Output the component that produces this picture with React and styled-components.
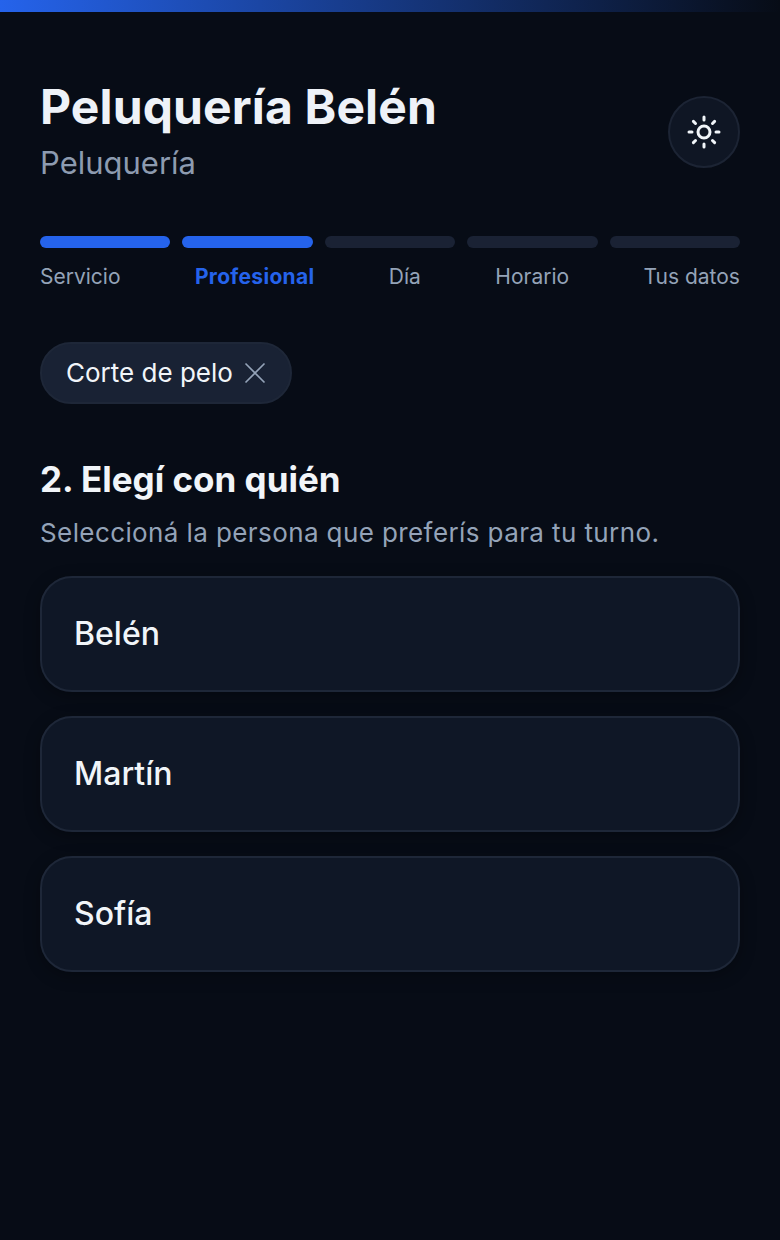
import React from 'react';
import styled, { createGlobalStyle } from 'styled-components';
import { Sun } from 'lucide-react';

const steps = [
  { label: 'Servicio', done: true },
  { label: 'Profesional', done: true, active: true },
  { label: 'Día' },
  { label: 'Horario' },
  { label: 'Tus datos' },
];

const people = ['Belén', 'Martín', 'Sofía'];

const App = () => {
  return (
    <Page>
      <GlobalStyle />
      <TopBar />
      <Content>
        <Header>
          <div>
            <Title>Peluquería Belén</Title>
            <Subtitle>Peluquería</Subtitle>
          </div>
          <ThemeButton>
            <Sun size={36} strokeWidth={2} />
          </ThemeButton>
        </Header>

        <Bars>
          {steps.map((s) => (
            <Bar key={s.label} $done={s.done} />
          ))}
        </Bars>
        <Labels>
          {steps.map((s) => (
            <StepLabel key={s.label} $active={s.active}>
              {s.label}
            </StepLabel>
          ))}
        </Labels>

        <Chip>
          <ChipText>Corte de pelo</ChipText>
          <svg width="22" height="22" viewBox="0 0 22 22" fill="none" stroke="currentColor" strokeWidth="1.6">
            <path d="M1.5 1.5l19 19M20.5 1.5l-19 19" />
          </svg>
        </Chip>

        <Heading>2. Elegí con quién</Heading>
        <Hint>Seleccioná la persona que preferís para tu turno.</Hint>

        <List>
          {people.map((p) => (
            <PersonCard key={p}>{p}</PersonCard>
          ))}
        </List>
      </Content>
    </Page>
  );
};

const GlobalStyle = createGlobalStyle`
  body {
    margin: 0;
    background: #070c16;
    font-family: Inter, "Liberation Sans", sans-serif;
  }
`;

const Page = styled.div`
  min-height: 1240px;
  background: #070c16;
`;

const TopBar = styled.div`
  height: 12px;
  background: linear-gradient(90deg, #2563eb 0%, #070c16 100%);
`;

const Content = styled.div`
  padding: 68px 40px 0;
`;

const Header = styled.div`
  display: flex;
  justify-content: space-between;
  align-items: center;
  margin-bottom: 52px;
`;

const Title = styled.h1`
  margin: 0;
  font-size: 48px;
  line-height: 54px;
  font-weight: 700;
  letter-spacing: 0.13px;
  color: #eef2f8;
`;

const Subtitle = styled.p`
  margin: 8px 0 0;
  font-size: 31px;
  line-height: 42px;
  color: #8d9bb0;
`;

const ThemeButton = styled.button`
  display: flex;
  align-items: center;
  justify-content: center;
  width: 72px;
  height: 72px;
  padding: 0;
  border-radius: 50%;
  border: 2px solid #1c2434;
  background: #0f1624;
  color: #f1f5f9;
`;

const Bars = styled.div`
  display: flex;
  gap: 12px;
`;

const Bar = styled.div`
  flex: 1;
  height: 12px;
  border-radius: 6px;
  background: ${(p) => (p.$done ? '#2563eb' : '#1a2234')};
`;

const Labels = styled.div`
  display: flex;
  justify-content: space-between;
  margin-top: 16px;
  margin-bottom: 52px;
`;

const StepLabel = styled.span`
  font-size: 21px;
  line-height: 26px;
  font-weight: ${(p) => (p.$active ? 700 : 400)};
  letter-spacing: ${(p) => (p.$active ? '0.3px' : '0')};
  color: ${(p) => (p.$active ? '#2563eb' : '#94a3b8')};
`;

const Chip = styled.div`
  display: inline-flex;
  align-items: center;
  gap: 11px;
  height: 62px;
  box-sizing: border-box;
  padding: 0 24px;
  border-radius: 31px;
  border: 2px solid #1e2738;
  background: #192234;
  color: #f1f5f9;
  font-size: 26px;

  svg {
    color: #94a3b8;
  }
`;

const ChipText = styled.span`
  padding-bottom: 2px;
`;

const Heading = styled.h2`
  margin: 53px 0 0;
  font-size: 35px;
  line-height: 44px;
  font-weight: 700;
  color: #f1f5f9;
`;

const Hint = styled.p`
  margin: 14px 0 0;
  font-size: 26px;
  line-height: 36px;
  letter-spacing: 0.4px;
  color: #94a3b8;
`;

const List = styled.div`
  display: flex;
  flex-direction: column;
  gap: 24px;
  margin-top: 25px;
`;

const PersonCard = styled.div`
  display: flex;
  align-items: center;
  height: 116px;
  box-sizing: border-box;
  padding: 0 32px 2px;
  border-radius: 32px;
  border: 2px solid #1e2738;
  background: #0f1726;
  color: #f1f5f9;
  font-size: 32px;
  font-weight: 500;
  box-shadow: 0 4px 16px rgba(0, 0, 0, 0.3);
`;

export default App;
